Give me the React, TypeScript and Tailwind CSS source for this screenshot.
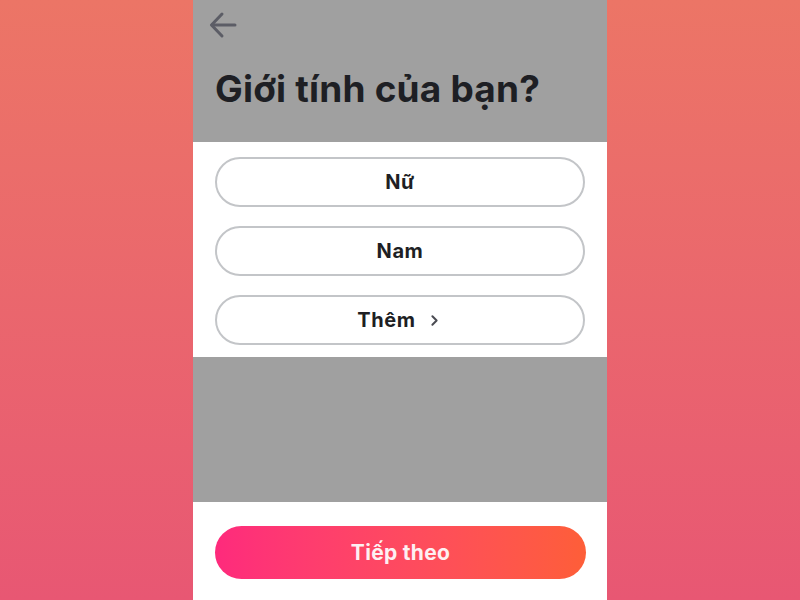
import { ChevronRight } from "lucide-react";

const options = ["Nữ", "Nam", "Thêm"];

export default function App() {
  return (
    <div
      className="flex h-[600px] w-[800px] justify-center overflow-hidden bg-gradient-to-b from-[#ec7566] to-[#e85773]"
      style={{ fontFamily: "Inter, 'Noto Sans', sans-serif" }}
    >
      <div className="flex h-full w-[414px] flex-col">
        <div className="h-[142px] bg-[#a0a0a0] px-[22px]">
          <div className="-ml-[7px] pt-[10px]">
            <svg width="30" height="30" viewBox="0 0 30 30" fill="none" stroke="#5c5d66" strokeWidth="3" strokeLinecap="round" strokeLinejoin="round">
              <path d="M27 15H4" />
              <path d="M14 4L3.5 15L14 26" />
            </svg>
          </div>
          <h1 className="mt-[30px] text-[37px] font-bold leading-none tracking-[0.2px] text-[#1e1f24]">
            Giới tính của bạn?
          </h1>
        </div>
        <div className="flex h-[215px] flex-col gap-[19px] bg-white px-[22px] pt-[15px]">
          {options.map((o) => (
            <button
              key={o}
              className="flex h-[50px] w-[370px] items-center justify-center gap-[8px] rounded-full border-2 border-[#c3c5c8] text-[20px] font-bold tracking-[0.6px] text-[#1e1f24]"
            >
              {o}
              {o === "Thêm" && <ChevronRight size={17} strokeWidth={2.8} className="ml-[2px] text-[#4a4b52]" />}
            </button>
          ))}
        </div>
        <div className="h-[145px] bg-[#a0a0a0]" />
        <div className="flex-1 bg-white px-[22px] pt-[24px]">
          <button className="flex h-[53px] w-[371px] items-center justify-center rounded-full bg-gradient-to-r from-[#fe2a7c] to-[#fe5e38] text-[21px] font-bold tracking-[0.3px] text-[#fdf0f2]">
            Tiếp theo
          </button>
        </div>
      </div>
    </div>
  );
}
